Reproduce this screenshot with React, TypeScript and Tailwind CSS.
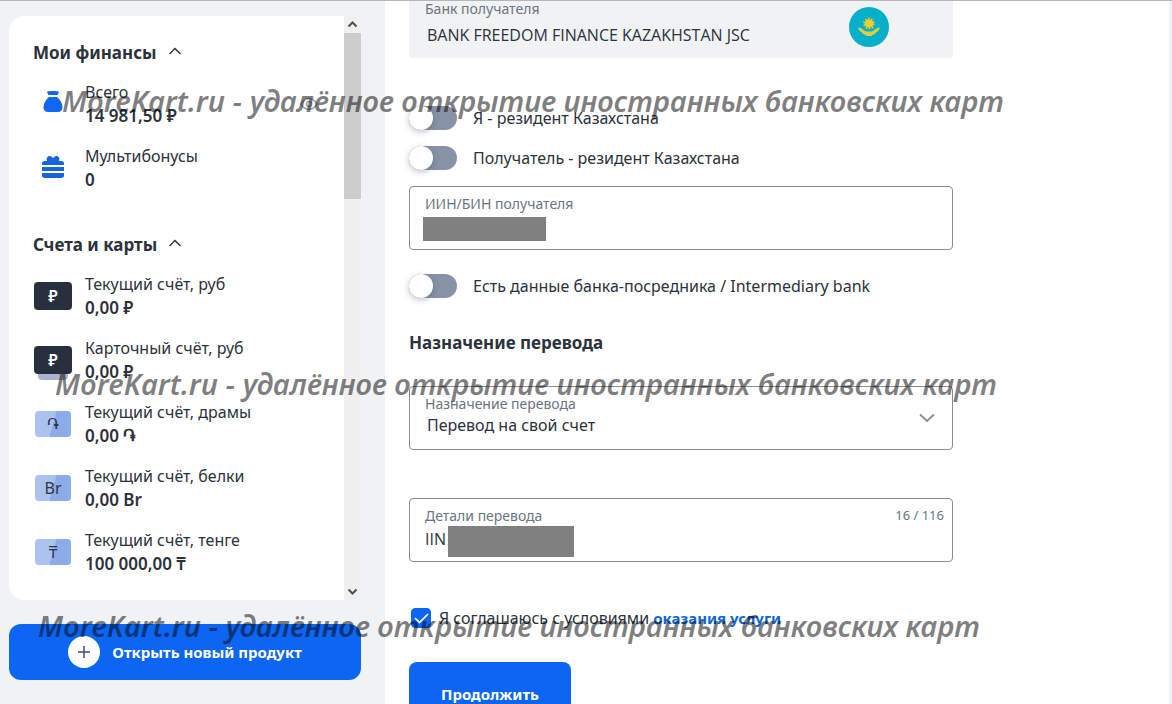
import React, { useState } from "react";

const WATERMARK = "MoreKart.ru - удалённое открытие иностранных банковских карт";

const accounts = [
  { name: "Текущий счёт, руб", amount: "0,00 ₽", sign: "₽", kind: "dark" },
  { name: "Карточный счёт, руб", amount: "0,00 ₽", sign: "₽", kind: "stack" },
  { name: "Текущий счёт, драмы", amount: "0,00 ֏", sign: "֏", kind: "light" },
  { name: "Текущий счёт, белки", amount: "0,00 Br", sign: "Br", kind: "light" },
  { name: "Текущий счёт, тенге", amount: "100 000,00 ₸", sign: "₸", kind: "light" },
];

const ChevronUp = () => (
  <svg className="mb-1" width="12" height="8" viewBox="0 0 12 8" fill="none" stroke="#2b323c" strokeWidth="1.5">
    <path d="M.5 7L6 1.500 11.500 7" />
  </svg>
);

const BagIcon = () => (
  <svg className="mb-1.5" width="24" height="24" viewBox="0 0 24 24" fill="#1166f2">
    <path d="M6.500 2.600c1.600-.7 9.400-.7 11 0 .5.2.5.600.3 1L16.600 6H7.400L6.200 3.600c-.2-.4-.2-.8.3-1z" />
    <path d="M8 8h8c3 2.500 5.500 6 5.500 10.300 0 3.100-1.800 4.700-4.500 4.700H7c-2.700 0-4.500-1.600-4.500-4.700C2.500 14 5 10.500 8 8z" />
  </svg>
);

const GiftIcon = () => (
  <svg className="mb-0.5" width="24" height="24" viewBox="0 0 24 24" fill="#1765d8">
    <path d="M1 10V8.500C1 7 2 6 3.500 6H6c-1-2.500.3-5 2.500-5C10.300 1 11.400 2.200 12 3.600 12.600 2.200 13.700 1 15.500 1 17.700 1 19 3.500 18 6h2.500C22 6 23 7 23 8.500V10z" />
    <path d="M1 12h22v4H1z" />
    <path d="M1 18h22v2.500c0 1.500-1 2.500-2.500 2.500h-17C2 23 1 22 1 20.500z" />
  </svg>
);

const EyeIcon = () => (
  <svg width="18" height="14" viewBox="0 0 18 14" fill="none" stroke="#a3abb8" strokeWidth="1.600">
    <path d="M1 7c4-7 12-7 16 0-4 7-12 7-16 0z" />
    <circle cx="9" cy="7" r="2.500" />
  </svg>
);

const KazakhstanFlag = () => (
  <svg width="40" height="40" viewBox="0 0 40 40">
    <circle cx="20" cy="20" r="20" fill="#06afca" />
    <circle cx="20" cy="16.500" r="4.300" fill="#f4cf26" />
    <circle cx="20" cy="16.500" r="5" fill="none" stroke="#f4cf26" strokeWidth="1.500" strokeDasharray="1.570 1.570" />
    <path d="M9 20.500c3 .2 4.500 1.300 6 3 1.500 1 3.200 1.100 5 1.100s3.500-.1 5-1.100c1.500-1.700 3-2.800 6-3-.5 2.500-2.200 4-4.200 5-.8 1.800-2 2.400-3.300 2.400L22.500 29h-5l-1-1.100c-1.300 0-2.500-.6-3.300-2.400-2-1-3.700-2.500-4.200-5z" fill="#d9d03c" />
  </svg>
);

const AccountIcon = ({ sign, kind }: { sign: string; kind: string }) => {
  if (kind === "light") {
    return (
      <span className="flex h-[26px] w-9 items-center justify-center rounded bg-linear-105 from-[#abc2ef] from-50% to-[#8dabe9] to-50% text-base leading-none text-[#2b3645]">
        {sign}
      </span>
    );
  }
  return (
    <span className="relative flex">
      {kind === "stack" && (
        <span className="absolute inset-x-1 -bottom-1.5 h-3 rounded bg-[#abb4cc]" />
      )}
      <span className="relative flex h-7 w-[38px] items-center justify-center rounded bg-[#28303c] text-base leading-none font-semibold text-white">
        {sign}
      </span>
    </span>
  );
};

const SidebarRow = ({ icon, name, amount }: { icon: React.ReactNode; name: string; amount: string }) => (
  <li className="flex items-center gap-3">
    <span className="flex w-10 justify-center">{icon}</span>
    <span className="flex flex-col">
      <span className="text-base leading-6">{name}</span>
      <span className="text-[17px] leading-6 font-semibold">{amount}</span>
    </span>
  </li>
);

const SectionTitle = ({ children }: { children: React.ReactNode }) => (
  <button type="button" className="flex items-center gap-3 text-[17px] leading-6 font-bold">
    {children}
    <ChevronUp />
  </button>
);

const Toggle = ({ label }: { label: string }) => (
  <label className="flex items-center gap-4 text-base leading-6">
    <input
      type="checkbox"
      className="h-6 w-12 shrink-0 appearance-none rounded-full bg-[#8893a7] before:block before:size-6 before:rounded-full before:bg-white before:shadow-[0_2px_6px_rgba(40,50,70,0.3)] checked:bg-[#1166f2] checked:before:ml-6"
    />
    {label}
  </label>
);

const Sidebar = () => (
  <aside className="flex w-[385px] shrink-0 flex-col gap-6 pt-[15px] pr-6 pl-[9px]">
    <div className="flex">
      <div className="flex-1 rounded-l-2xl bg-white px-6 pt-[25px] pb-6">
        <SectionTitle>Мои финансы</SectionTitle>
        <ul className="mt-[15px] flex flex-col gap-4">
          <li className="flex items-center justify-between pr-0.5">
            <ul>
              <SidebarRow icon={<BagIcon />} name="Всего" amount="14 981,50 ₽" />
            </ul>
            <EyeIcon />
          </li>
          <SidebarRow icon={<GiftIcon />} name="Мультибонусы" amount="0" />
        </ul>
        <div className="mt-[41px]">
          <SectionTitle>Счета и карты</SectionTitle>
        </div>
        <ul className="mt-[15px] flex flex-col gap-4">
          {accounts.map((a) => (
            <SidebarRow
              key={a.name}
              icon={<AccountIcon sign={a.sign} kind={a.kind} />}
              name={a.name}
              amount={a.amount}
            />
          ))}
        </ul>
      </div>
      <div className="flex w-[17px] flex-col items-center bg-[#f0f0f0]">
        <svg width="17" height="17" viewBox="0 0 17 17" fill="none" stroke="#505050" strokeWidth="2">
          <path d="M4.500 10.500l4-4 4 4" />
        </svg>
        <div className="h-[166px] w-full bg-[#cdcdcd]" />
        <svg className="mt-auto" width="17" height="17" viewBox="0 0 17 17" fill="none" stroke="#505050" strokeWidth="2">
          <path d="M4.500 6.500l4 4 4-4" />
        </svg>
      </div>
    </div>
    <button
      type="button"
      className="flex h-14 items-center justify-center gap-3 rounded-xl bg-[#0d66f2] text-[15px] font-bold text-white"
    >
      <span className="flex size-8 items-center justify-center rounded-full bg-white">
        <svg width="14" height="14" viewBox="0 0 14 14" stroke="#3a4f87" strokeWidth="1.500">
          <path d="M7 1v12M1 7h12" />
        </svg>
      </span>
      Открыть новый продукт
    </button>
  </aside>
);

const TransferForm = () => {
  const [details, setDetails] = useState("IIN");
  const [iin, setIin] = useState("");

  return (
    <form className="flex w-full max-w-[544px] flex-col">
      <div className="flex h-[57px] items-start justify-between rounded-b bg-[#f1f2f4] pr-16 pl-4">
        <label className="flex flex-1 flex-col text-sm leading-4 text-[#6a7482]">
          Банк получателя
          <input
            readOnly
            value="BANK FREEDOM FINANCE KAZAKHSTAN JSC"
            className="mt-1.5 h-6 pl-0.5 font-['Open_Sans',sans-serif] text-base text-[#2b323c] outline-none"
          />
        </label>
        <div className="pt-1.5">
          <KazakhstanFlag />
        </div>
      </div>

      <div className="mt-12 flex flex-col gap-4">
        <Toggle label="Я - резидент Казахстана" />
        <Toggle label="Получатель - резидент Казахстана" />
      </div>

      <label className="relative mt-4 flex h-16 flex-col rounded border border-[#8a8d93] px-[15px] pt-2 text-sm leading-[18px] text-[#6a7482]">
        ИИН/БИН получателя
        <input
          value={iin}
          onChange={(e) => setIin(e.target.value)}
          className="h-6 font-['Open_Sans',sans-serif] text-base text-[#2b323c] outline-none"
        />
        <span className="absolute top-[30px] left-[13px] h-6 w-[123px] bg-[#808080]" />
      </label>

      <div className="mt-6">
        <Toggle label="Есть данные банка-посредника / Intermediary bank" />
      </div>

      <h2 className="mt-[33px] text-[17px] leading-6 font-bold">Назначение перевода</h2>

      <label className="mt-[31px] flex h-16 items-start rounded border border-[#8a8d93] px-[15px] pt-2 text-sm leading-[18px] text-[#6a7482]">
        <span className="flex flex-1 flex-col">
          Назначение перевода
          <select className="h-6 appearance-none pl-0.5 text-base text-[#2b323c] outline-none">
            <option>Перевод на свой счет</option>
          </select>
        </span>
        <svg className="mt-[18px] mr-0.5" width="16" height="10" viewBox="0 0 16 10" fill="none" stroke="#8a8d93" strokeWidth="1.800">
          <path d="M1 1.500l7 6.500 7-6.500" />
        </svg>
      </label>

      <div className="relative mt-12 flex h-16 justify-between rounded border border-[#8a8d93] pt-2 pr-2 pl-[15px] text-sm leading-[18px] text-[#6a7482]">
        <label className="flex flex-1 flex-col">
          Детали перевода
          <input
            value={details}
            onChange={(e) => setDetails(e.target.value)}
            className="mt-0.5 h-6 font-['Open_Sans',sans-serif] text-base text-[#2b323c] outline-none"
          />
        </label>
        <span className="text-[13px] leading-4">16 / 116</span>
        <span className="absolute top-[27px] left-[38px] h-[31px] w-[126px] bg-[#808080]" />
      </div>

      <div className="mt-11 flex items-center gap-2 pl-0.5 text-base leading-6">
        <span className="grid size-5">
          <input
            id="agree"
            type="checkbox"
            defaultChecked
            className="peer col-start-1 row-start-1 size-5 appearance-none rounded border border-[#8a8d93] checked:border-[#0d66f2] checked:bg-[#0d66f2]"
          />
          <svg
            className="pointer-events-none invisible col-start-1 row-start-1 peer-checked:visible"
            width="20"
            height="20"
            viewBox="0 0 20 20"
            fill="none"
            stroke="#fff"
            strokeWidth="1.700"
          >
            <path d="M4 10l4.500 4.500L17 6" />
          </svg>
        </span>
        <label htmlFor="agree">
          Я соглашаюсь с условиями{" "}
          <a href="#terms" className="text-[15px] font-bold text-[#0d66d8]">
            оказания услуги
          </a>
        </label>
      </div>

      <button
        type="button"
        className="mt-8 h-16 self-start rounded-lg bg-[#0d66f2] px-8 text-[15px] font-bold text-white"
      >
        Продолжить
      </button>
    </form>
  );
};

const App = () => {
  return (
    <div className="relative flex h-screen overflow-hidden border-t border-[#b3b6bf] bg-[#f1f2f4] font-['Noto_Sans','DejaVu_Sans',sans-serif] text-[#2b323c]">
      <Sidebar />
      <main className="mr-[3px] flex-1 bg-white px-6">
        <TransferForm />
      </main>

      <div className="pointer-events-none absolute inset-0 text-[29px] leading-9 font-semibold whitespace-nowrap text-black/50 italic">
        <p className="absolute top-[82px] left-[62px]">{WATERMARK}</p>
        <p className="absolute top-[365px] left-[55px]">{WATERMARK}</p>
        <p className="absolute top-[607px] left-[38px]">{WATERMARK}</p>
      </div>
    </div>
  );
};

export default App;
